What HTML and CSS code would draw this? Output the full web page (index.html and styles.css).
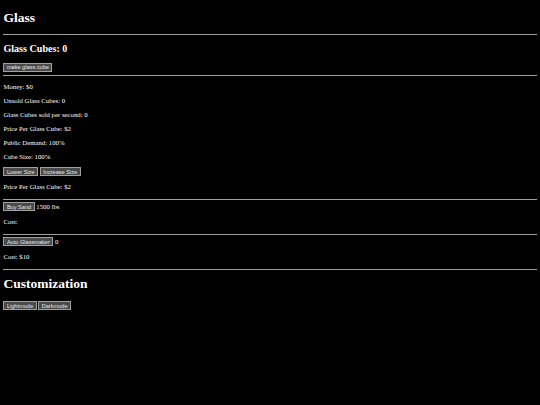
FILE: index.html
```html
<!DOCTYPE html>
<html lang="en">
<head>
  <meta charset="UTF-8" />
  <title>Glass</title>
  <link rel="stylesheet" href="styles.css">
</head>
<body>
  <h1>Glass</h1>
  <hr>
  <h2>Glass Cubes: <span id="cubes">0</span></h2>
  <button class="btn" id="makeBtn">make glass cube</button>
  <hr>
  <p>Money: $<span id="money">0</span></p>
  <p>Unsold Glass Cubes: <span id="unsold">0</span></p>
  <p>Glass Cubes sold per second: <span id="rate">0</span></p>
  <p>Price Per Glass Cube: $<span id="price">2</span></p>
  <p>Public Demand: <span id="demand">100</span>%</p>
  <p>Cube Size: <span id="size">100</span>%</p>
  <button class="btn">Lower Size</button>
  <button class="btn">Increase Size</button>
  <p>Price Per Glass Cube: $2</p>
  <hr>
  <button class="btn">Buy Sand</button> <span id="sand">1500</span> lbs
  <p>Cost: </p>
  <hr>
  <button class="btn">Auto Glassmaker</button> <span id="auto">0</span>
  <p>Cost: $10</p>
  <hr>
  <h1 class="section-title">Customization</h1>
  <button class="btn">Lightmode</button>
  <button class="btn">Darkmode</button>
</body>
</html>
```

FILE: styles.css
```css
html {
  background: #000;
}
body {
  margin: 3.4px;
  font-family: "Liberation Serif", serif;
  font-size: 6.75px;
  color: #fff;
  background: #000;
}
h1 {
  font-size: 13.5px;
  margin: 7px 0 7.5px;
}
h1.section-title {
  margin: 6px 0 9px;
}
h2 {
  font-size: 10.1px;
  margin: 8.4px 0;
}
p {
  margin: 7px 0;
}
hr {
  border: none;
  border-top: 1px solid #a0a0a0;
  margin: 3.4px 0 2px;
}
p + hr {
  margin-top: 9px;
}
.btn {
  font-family: "Liberation Sans", sans-serif;
  font-size: 5.6px;
  color: #e6e6e6;
  background: #4a4a4a;
  border: 1px solid #a0a0a0;
  padding: 0.5px 2.5px;
  margin: 0;
}
```
